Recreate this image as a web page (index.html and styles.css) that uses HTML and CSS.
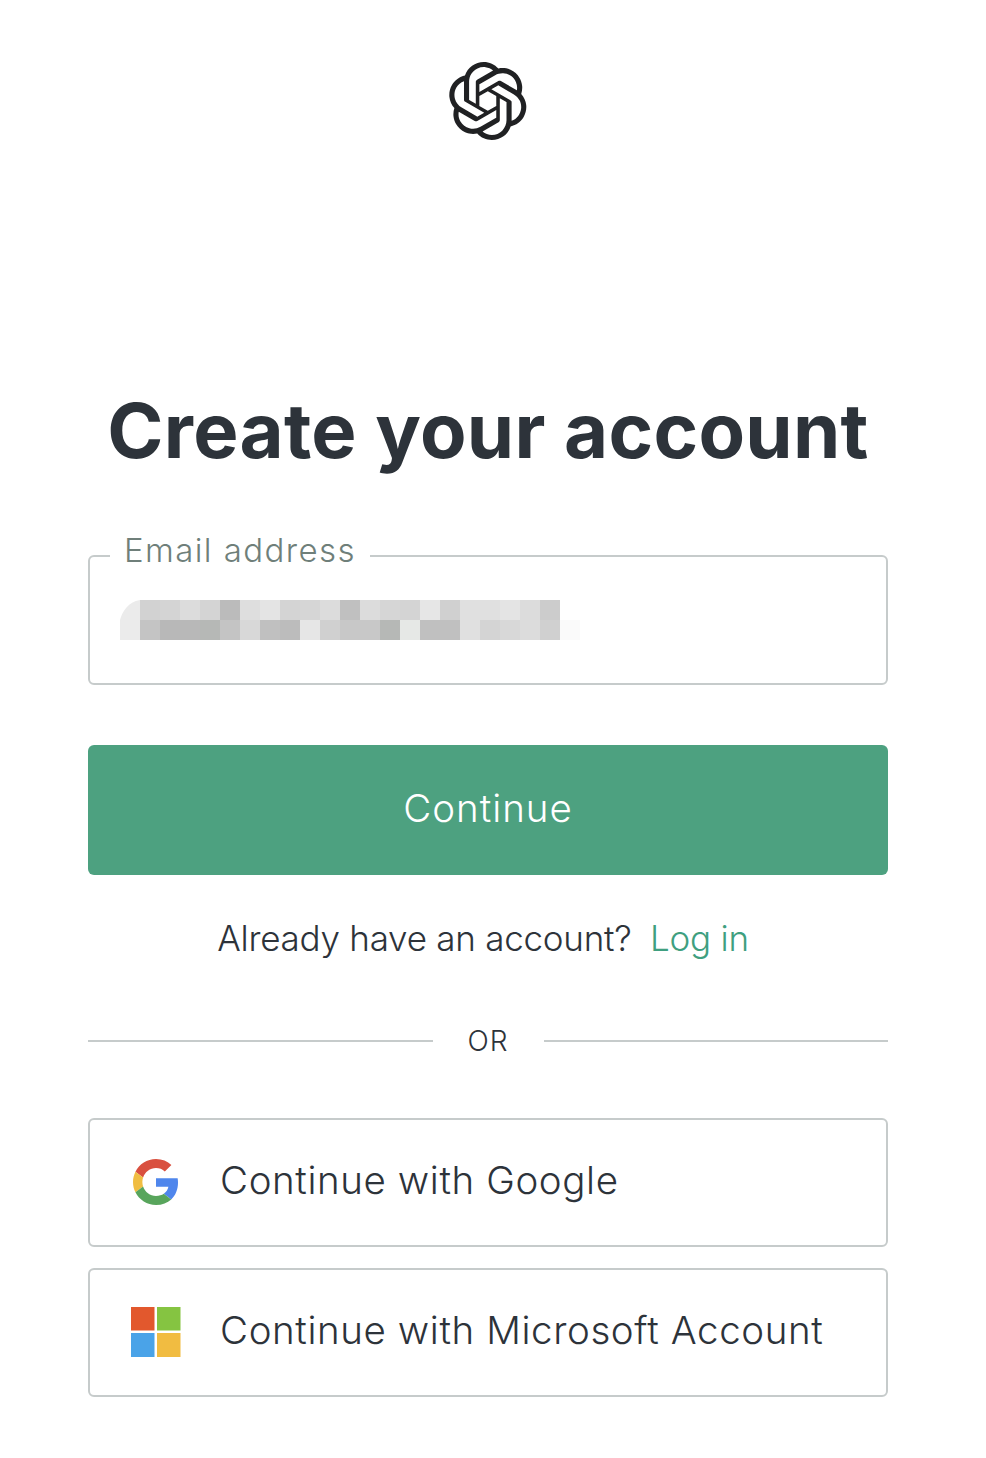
FILE: index.html
```html
<!DOCTYPE html>
<html lang="en">
<head>
    <meta charset="UTF-8">
    <meta name="viewport" content="width=device-width, initial-scale=1.0">
    <title>Create your account</title>
    <link rel="stylesheet" href="styles.css">
</head>
<body>
    <header class="logo">
        <svg width="80" height="80" viewBox="0 0 41 41" aria-label="OpenAI">
            <path fill="#202123" d="M37.5324 16.8707C37.9808 15.5241 38.1363 14.0974 37.9886 12.6859C37.8409 11.2744 37.3934 9.91076 36.676 8.68622C35.6126 6.83404 33.9882 5.3676 32.0373 4.4985C30.0864 3.62941 27.9098 3.40259 25.8215 3.85078C24.8796 2.7893 23.7219 1.94125 22.4257 1.36341C21.1295 0.785575 19.7249 0.491269 18.3058 0.500197C16.1708 0.495044 14.0893 1.16803 12.3614 2.42214C10.6335 3.67624 9.34853 5.44666 8.6917 7.47815C7.30085 7.76286 5.98686 8.3414 4.8377 9.17505C3.68854 10.0087 2.73073 11.0782 2.02839 12.312C0.956464 14.1591 0.498905 16.2988 0.721698 18.4228C0.944492 20.5467 1.83612 22.5449 3.268 24.1293C2.81966 25.4759 2.66413 26.9026 2.81182 28.3141C2.95951 29.7256 3.40701 31.0892 4.12437 32.3138C5.18791 34.1659 6.8123 35.6322 8.76321 36.5013C10.7141 37.3704 12.8907 37.5973 14.9789 37.1492C15.9208 38.2107 17.0786 39.0587 18.3747 39.6366C19.6709 40.2144 21.0755 40.5087 22.4946 40.4998C24.6307 40.5054 26.7133 39.8321 28.4418 38.5772C30.1704 37.3223 31.4556 35.5506 32.1119 33.5179C33.5027 33.2332 34.8167 32.6547 35.9659 31.821C37.115 30.9874 38.0728 29.9178 38.7752 28.684C39.8458 26.8371 40.3023 24.6979 40.0789 22.5748C39.8556 20.4517 38.9639 18.4544 37.5324 16.8707ZM22.4978 37.8849C20.7443 37.8874 19.0459 37.2733 17.6994 36.1501C17.7601 36.117 17.8666 36.0586 17.936 36.0161L25.9004 31.4156C26.1003 31.3019 26.2663 31.137 26.3813 30.9378C26.4964 30.7386 26.5563 30.5124 26.5549 30.2825V19.0542L29.9213 20.998C29.9389 21.0068 29.9541 21.0198 29.9656 21.0359C29.977 21.052 29.9842 21.0707 29.9867 21.0902V30.3889C29.9842 32.375 29.1946 34.2791 27.7909 35.6841C26.3872 37.0892 24.4838 37.8806 22.4978 37.8849ZM6.39227 31.0064C5.51397 29.4888 5.19742 27.7107 5.49804 25.9832C5.55718 26.0187 5.66048 26.0818 5.73461 26.1244L13.699 30.7248C13.8975 30.8408 14.1233 30.902 14.3532 30.902C14.583 30.902 14.8088 30.8408 15.0073 30.7248L24.731 25.1103V28.9979C24.7321 29.0177 24.7283 29.0376 24.7199 29.0556C24.7115 29.0736 24.6988 29.0893 24.6829 29.1012L16.6317 33.7497C14.9096 34.7416 12.8643 35.0097 10.9447 34.4954C9.02506 33.9811 7.38785 32.7263 6.39227 31.0064ZM4.29707 13.6194C5.17156 12.0998 6.55279 10.9364 8.19885 10.3327C8.19885 10.4013 8.19491 10.5228 8.19491 10.6071V19.808C8.19351 20.0378 8.25334 20.2638 8.36823 20.4629C8.48312 20.6619 8.64893 20.8267 8.84863 20.9404L18.5723 26.5542L15.206 28.4979C15.1894 28.5089 15.1703 28.5155 15.1505 28.5173C15.1307 28.5191 15.1107 28.516 15.0924 28.5082L7.04046 23.8557C5.32135 22.8601 4.06716 21.2235 3.55289 19.3046C3.03862 17.3858 3.30624 15.3413 4.29707 13.6194ZM31.955 20.0556L22.2312 14.4411L25.5976 12.4981C25.6142 12.4872 25.6333 12.4805 25.6531 12.4787C25.6729 12.4769 25.6928 12.4801 25.7111 12.4879L33.7631 17.1364C34.9967 17.849 36.0017 18.8982 36.6606 20.1613C37.3194 21.4244 37.6047 22.849 37.4832 24.2684C37.3617 25.6878 36.8382 27.0432 35.9743 28.1759C35.1103 29.3086 33.9415 30.1717 32.6047 30.6641C32.6047 30.5947 32.6047 30.4733 32.6047 30.3889V21.188C32.6066 20.9586 32.5474 20.7328 32.4332 20.5338C32.319 20.3348 32.154 20.1698 31.955 20.0556ZM35.3055 15.0128C35.2464 14.9765 35.1431 14.9142 35.069 14.8717L27.1045 10.2712C26.906 10.1554 26.6803 10.0943 26.4504 10.0943C26.2206 10.0943 25.9948 10.1554 25.7963 10.2712L16.0726 15.8858V11.9982C16.0715 11.9783 16.0753 11.9585 16.0837 11.9405C16.0921 11.9225 16.1048 11.9068 16.1207 11.8949L24.1719 7.25025C25.4053 6.53903 26.8158 6.19376 28.2383 6.25482C29.6608 6.31589 31.0364 6.78077 32.2044 7.59508C33.3723 8.40939 34.2842 9.53945 34.8334 10.8531C35.3826 12.1667 35.5464 13.6095 35.3055 15.0128ZM14.2424 21.9419L10.8752 19.9981C10.8576 19.9893 10.8423 19.9763 10.8309 19.9602C10.8195 19.9441 10.8122 19.9254 10.8098 19.9058V10.6071C10.8107 9.18295 11.2173 7.78848 11.9819 6.58696C12.7466 5.38544 13.8377 4.42659 15.1275 3.82264C16.4173 3.21869 17.8524 2.99464 19.2649 3.1767C20.6775 3.35876 22.0089 3.93941 23.1034 4.85067C23.0427 4.88379 22.937 4.94215 22.8668 4.98473L14.9024 9.58517C14.7025 9.69878 14.5366 9.86356 14.4215 10.0626C14.3065 10.2616 14.2466 10.4877 14.2479 10.7175L14.2424 21.9419ZM16.071 17.9991L20.4018 15.4978L24.7325 17.9975V22.9985L20.4018 25.4983L16.071 22.9985V17.9991Z"/>
        </svg>
    </header>

    <main class="panel">
        <h1>Create your account</h1>

        <div class="email-field">
            <label class="email-label">Email address</label>
            <!-- blurred address -->
            <svg class="email-blur" width="460" height="40" viewBox="0 0 460 40">
                <path fill="#ebebeb" d="M0 40V20C2 12 8 2 20 0V40Z"/>
                <rect x="20" y="0" width="20" height="20" fill="#d2d2d2"/><rect x="20" y="20" width="20" height="20" fill="#c4c4c4"/>
                <rect x="40" y="0" width="20" height="20" fill="#d4d4d4"/><rect x="40" y="20" width="20" height="20" fill="#b8b8b8"/>
                <rect x="60" y="0" width="20" height="20" fill="#dcdcdc"/><rect x="60" y="20" width="20" height="20" fill="#b8b8b8"/>
                <rect x="80" y="0" width="20" height="20" fill="#d4d4d4"/><rect x="80" y="20" width="20" height="20" fill="#b6b8b6"/>
                <rect x="100" y="0" width="20" height="20" fill="#bbbbbb"/><rect x="100" y="20" width="20" height="20" fill="#c4c4c4"/>
                <rect x="120" y="0" width="20" height="20" fill="#dedede"/><rect x="120" y="20" width="20" height="20" fill="#d8d8d8"/>
                <rect x="140" y="0" width="20" height="20" fill="#e4e4e4"/><rect x="140" y="20" width="20" height="20" fill="#c0c0c0"/>
                <rect x="160" y="0" width="20" height="20" fill="#d4d4d4"/><rect x="160" y="20" width="20" height="20" fill="#bcbcbc"/>
                <rect x="180" y="0" width="20" height="20" fill="#d6d6d6"/><rect x="180" y="20" width="20" height="20" fill="#e6e6e6"/>
                <rect x="200" y="0" width="20" height="20" fill="#dcdcdc"/><rect x="200" y="20" width="20" height="20" fill="#d0d0d0"/>
                <rect x="220" y="0" width="20" height="20" fill="#c0c0c0"/><rect x="220" y="20" width="20" height="20" fill="#c8c8c8"/>
                <rect x="240" y="0" width="20" height="20" fill="#dcdcdc"/><rect x="240" y="20" width="20" height="20" fill="#c8c8c8"/>
                <rect x="260" y="0" width="20" height="20" fill="#d6d6d6"/><rect x="260" y="20" width="20" height="20" fill="#b6b8b6"/>
                <rect x="280" y="0" width="20" height="20" fill="#d4d4d4"/><rect x="280" y="20" width="20" height="20" fill="#e6e8e6"/>
                <rect x="300" y="0" width="20" height="20" fill="#e6e6e6"/><rect x="300" y="20" width="20" height="20" fill="#c0c0c0"/>
                <rect x="320" y="0" width="20" height="20" fill="#d0d0d0"/><rect x="320" y="20" width="20" height="20" fill="#c0c0c0"/>
                <rect x="340" y="0" width="20" height="20" fill="#e0e0e0"/><rect x="340" y="20" width="20" height="20" fill="#e0e0e0"/>
                <rect x="360" y="0" width="20" height="20" fill="#e0e0e0"/><rect x="360" y="20" width="20" height="20" fill="#d4d4d4"/>
                <rect x="380" y="0" width="20" height="20" fill="#e4e4e4"/><rect x="380" y="20" width="20" height="20" fill="#d8d8d8"/>
                <rect x="400" y="0" width="20" height="20" fill="#dcdcdc"/><rect x="400" y="20" width="20" height="20" fill="#dcdcdc"/>
                <rect x="420" y="0" width="20" height="20" fill="#cccccc"/><rect x="420" y="20" width="20" height="20" fill="#d0d0d0"/>
                <rect x="440" y="20" width="20" height="20" fill="#fafafa"/>
            </svg>
        </div>

        <button class="continue-btn">Continue</button>

        <p class="login-line">Already have an account? <a href="#login">Log in</a></p>

        <div class="divider"><span>OR</span></div>

        <div class="social-list">
            <button class="social-btn">
                <span class="social-icon">
                    <svg width="46" height="46" viewBox="0 0 48 48">
                        <path fill="#d9503f" d="M24 9.5c3.54 0 6.71 1.22 9.21 3.6l6.85-6.85C35.9 2.38 30.47 0 24 0 14.62 0 6.51 5.38 2.56 13.22l7.98 6.19C12.43 13.72 17.74 9.5 24 9.5z"/>
                        <path fill="#4f86ec" d="M46.98 24.55c0-1.57-.15-3.09-.38-4.55H24v9.02h12.94c-.58 2.96-2.26 5.48-4.78 7.18l7.73 6c4.51-4.18 7.09-10.36 7.09-17.65z"/>
                        <path fill="#f0bd42" d="M10.53 28.59c-.48-1.45-.76-2.99-.76-4.59s.27-3.14.76-4.59l-7.98-6.19C.92 16.46 0 20.12 0 24c0 3.88.92 7.54 2.56 10.78l7.97-6.19z"/>
                        <path fill="#58a55c" d="M24 48c6.48 0 11.93-2.13 15.89-5.81l-7.73-6c-2.15 1.45-4.92 2.3-8.16 2.3-6.26 0-11.57-4.22-13.47-9.91l-7.98 6.19C6.51 42.62 14.62 48 24 48z"/>
                    </svg>
                </span>
                <span class="social-text">Continue with Google</span>
            </button>
            <button class="social-btn">
                <span class="social-icon">
                    <svg width="50" height="50" viewBox="0 0 50 50">
                        <rect x="0" y="0" width="23.5" height="23.5" fill="#e2582d"/>
                        <rect x="26" y="0" width="23.5" height="23.5" fill="#85c441"/>
                        <rect x="0" y="26" width="23.5" height="24" fill="#4aa3e8"/>
                        <rect x="26" y="26" width="23.5" height="24" fill="#f1bc41"/>
                    </svg>
                </span>
                <span class="social-text">Continue with Microsoft Account</span>
            </button>
        </div>
    </main>
</body>
</html>
```

FILE: styles.css
```css
/* Reset and Base Styles */
* {
    margin: 0;
    padding: 0;
    box-sizing: border-box;
    font-family: Inter, 'Noto Sans', sans-serif;
}

body {
    background: #ffffff;
    color: #2d333a;
    width: 976px;
    min-height: 1458px;
}

/* Logo */
.logo {
    display: flex;
    justify-content: center;
    padding-top: 61px;
}

/* Main Panel */
.panel {
    width: 800px;
    margin: 0 auto;
}

h1 {
    margin-top: 244px;
    font-size: 76px;
    line-height: 90px;
    font-weight: 700;
    letter-spacing: 0.3px;
    text-align: center;
    color: #2d333a;
}

/* Email Field */
.email-field {
    position: relative;
    height: 130px;
    margin-top: 80px;
    padding: 43px 0 0 30px;
    border: 2px solid #c6cbcb;
    border-radius: 6px;
}

.email-label {
    position: absolute;
    top: -29px;
    left: 20px;
    padding: 0 14px;
    background: #ffffff;
    color: #6f7f7a;
    font-size: 33px;
    font-weight: 350;
    line-height: 44px;
    letter-spacing: 1.4px;
}

.email-blur {
    display: block;
}

/* Continue Button */
.continue-btn {
    display: block;
    width: 100%;
    height: 130px;
    margin-top: 60px;
    padding-bottom: 4px;
    border: none;
    border-radius: 6px;
    background: #4da180;
    color: #ffffff;
    font-size: 38.5px;
    font-weight: 350;
    letter-spacing: 1px;
}

.login-line {
    margin-top: 41px;
    padding-right: 10px;
    text-align: center;
    font-size: 35px;
    font-weight: 350;
    line-height: 44px;
    letter-spacing: -0.25px;
    color: #2d333a;
}

.login-line a {
    margin-left: 9px;
    color: #3f9f80;
    text-decoration: none;
}

/* OR Divider */
.divider {
    display: flex;
    align-items: center;
    margin-top: 61px;
    color: #2d333a;
    font-size: 28px;
    font-weight: 350;
    line-height: 40px;
    letter-spacing: 1px;
}

.divider::before,
.divider::after {
    content: "";
    flex: 1;
    height: 2px;
    background: #c6cbcb;
}

.divider span {
    padding: 0 35px;
}

/* Social Buttons */
.social-list {
    display: flex;
    flex-direction: column;
    gap: 21px;
    margin-top: 57px;
}

.social-btn {
    display: flex;
    align-items: center;
    width: 100%;
    height: 129px;
    padding: 0 0 1px 40px;
    border: 2px solid #c6cbcb;
    border-radius: 6px;
    background: #ffffff;
    color: #2d333a;
    font-size: 38.5px;
    font-weight: 350;
    letter-spacing: 0.6px;
}

.social-icon {
    display: flex;
    justify-content: center;
    width: 52px;
    margin-right: 38px;
}

.social-text {
    padding-bottom: 4px;
}
```
